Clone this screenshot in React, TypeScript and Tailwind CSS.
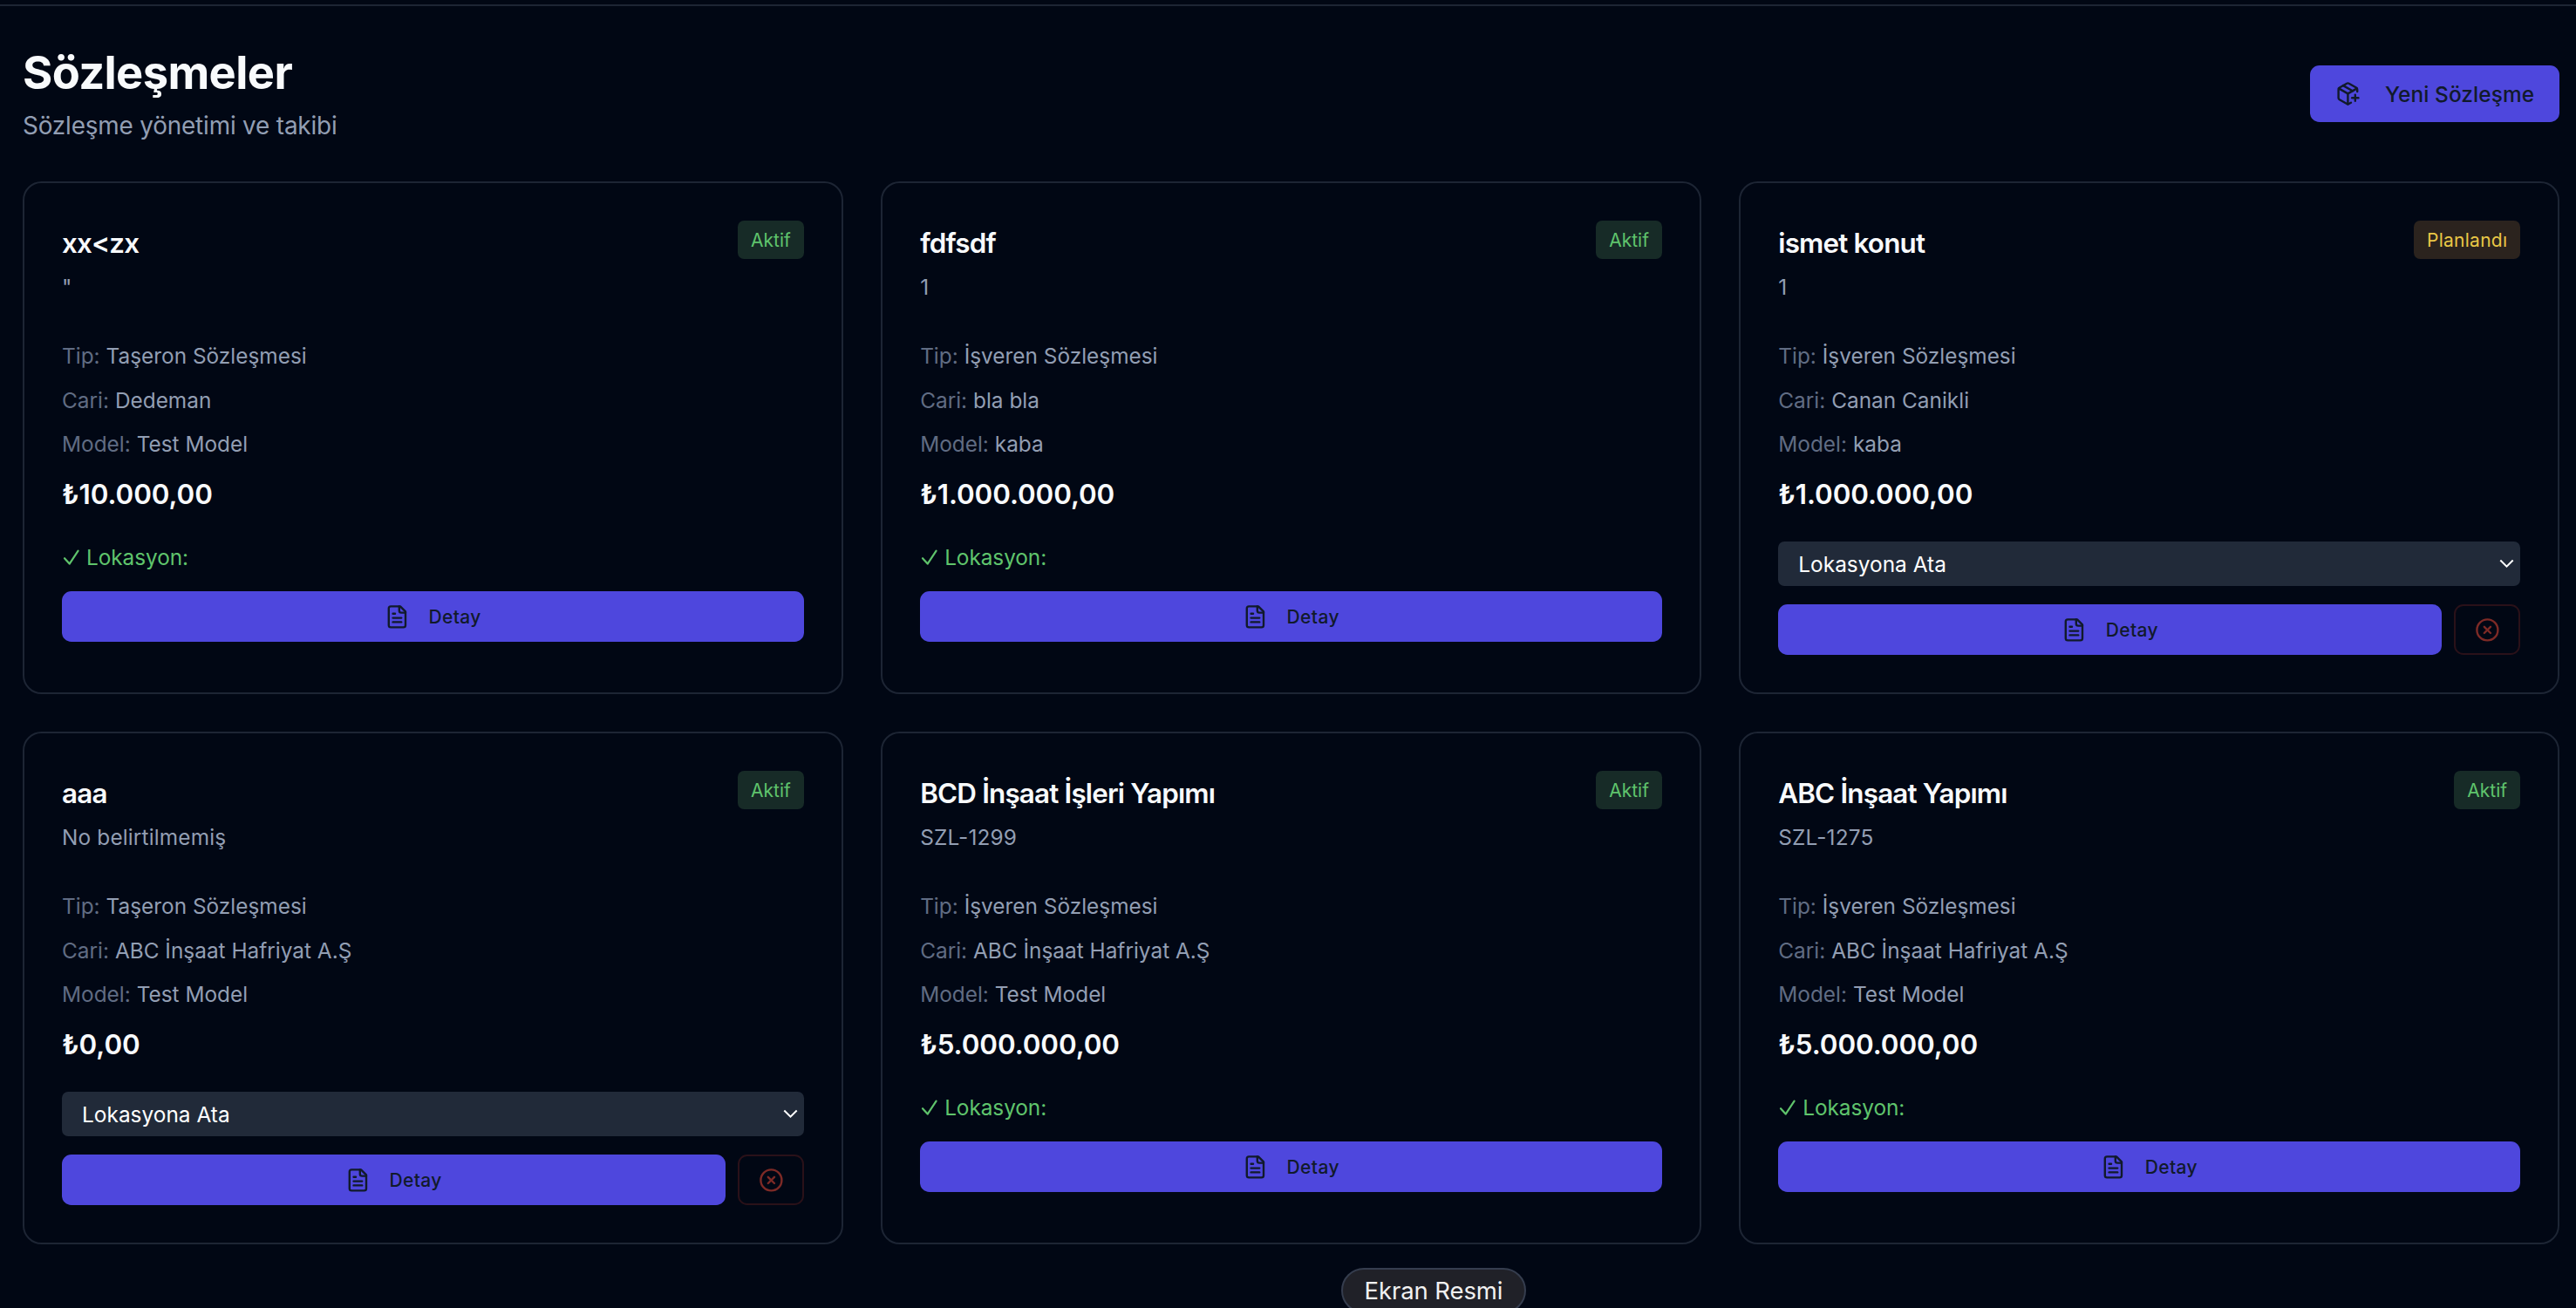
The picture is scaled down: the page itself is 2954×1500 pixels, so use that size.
import { CircleX, PackagePlus } from "lucide-react";

type Status = "active" | "planned";

interface Contract {
  id: number;
  name: string;
  number: string;
  type: string;
  account: string;
  model: string;
  amount: string;
  status: Status;
  assigned: boolean;
}

const CONTRACTS: Contract[] = [
  { id: 1, name: "xx<zx", number: '"', type: "Taşeron Sözleşmesi", account: "Dedeman", model: "Test Model", amount: "₺10.000,00", status: "active", assigned: true },
  { id: 2, name: "fdfsdf", number: "1", type: "İşveren Sözleşmesi", account: "bla bla", model: "kaba", amount: "₺1.000.000,00", status: "active", assigned: true },
  { id: 3, name: "ismet konut", number: "1", type: "İşveren Sözleşmesi", account: "Canan Canikli", model: "kaba", amount: "₺1.000.000,00", status: "planned", assigned: false },
  { id: 4, name: "aaa", number: "No belirtilmemiş", type: "Taşeron Sözleşmesi", account: "ABC İnşaat Hafriyat A.Ş", model: "Test Model", amount: "₺0,00", status: "active", assigned: false },
  { id: 5, name: "BCD İnşaat İşleri Yapımı", number: "SZL-1299", type: "İşveren Sözleşmesi", account: "ABC İnşaat Hafriyat A.Ş", model: "Test Model", amount: "₺5.000.000,00", status: "active", assigned: true },
  { id: 6, name: "ABC İnşaat Yapımı", number: "SZL-1275", type: "İşveren Sözleşmesi", account: "ABC İnşaat Hafriyat A.Ş", model: "Test Model", amount: "₺5.000.000,00", status: "active", assigned: true },
];

const STATUS: Record<Status, { label: string; className: string }> = {
  active: { label: "Aktif", className: "w-[75.6px] bg-[#172b27] text-[#5fc46c]" },
  planned: { label: "Planlandı", className: "w-[121.6px] bg-[#2b231e] text-[#e9c746] tracking-[0.012em]" },
};

const DocumentIcon = () => (
  <svg viewBox="0 0 24 24" className="size-[28.8px]" fill="none" stroke="currentColor" strokeWidth="2" strokeLinecap="round" strokeLinejoin="round">
    <path d="M15 2H6a2 2 0 0 0-2 2v16a2 2 0 0 0 2 2h12a2 2 0 0 0 2-2V7Z" />
    <path d="M14 2v4a2 2 0 0 0 2 2h4" />
    <path d="M10 9H8" />
    <path d="M16 13H8" />
    <path d="M16 17H8" />
  </svg>
);

const InfoRow = ({ label, value }: { label: string; value: string }) => (
  <p className="text-[24.4px] leading-[36px] text-[#929eb3]">
    <span className="text-[#606c83]">{label}:</span> {value}
  </p>
);

const ContractCard = ({ contract }: { contract: Contract }) => {
  const status = STATUS[contract.status];

  return (
    <div className="flex h-[588px] flex-col rounded-[21.6px] border-2 border-[#1d2534] p-[43px]">
      {/* Header */}
      <div className="flex items-start justify-between">
        <div>
          <h3 className="text-[31.4px] leading-[52px] font-semibold tracking-[-0.0265em] text-[#f8fafc]">
            {contract.name}
          </h3>
          <p className="mt-1.5 text-[24.4px] leading-[36px] tracking-[0.006em] text-[#929eb3]">
            {contract.number}
          </p>
        </div>
        <span
          className={`h-[43.6px] rounded-[7.2px] pt-px text-center text-[21px] leading-[43.4px] font-[430] ${status.className}`}
        >
          {status.label}
        </span>
      </div>

      {/* Details */}
      <div className="mt-[43.3px] flex flex-col gap-[14.4px]">
        <InfoRow label="Tip" value={contract.type} />
        <InfoRow label="Cari" value={contract.account} />
        <InfoRow label="Model" value={contract.model} />
        <p className="text-[31.4px] leading-[52px] font-semibold tracking-[-0.003em] text-[#f8fafc]">
          {contract.amount}
        </p>
      </div>

      {/* Location */}
      {contract.assigned ? (
        <div className="mt-[27.5px] flex h-9 items-center text-[24.4px] leading-[36px] tracking-[-0.003em] text-[#5fc46c]">
          <svg viewBox="0 0 28 22" className="h-[22px] w-7" fill="none" stroke="currentColor" strokeWidth="2.2" strokeLinecap="round" strokeLinejoin="round">
            <path d="M3 12.2 8.7 18.6 18.6 3.6" />
          </svg>
          Lokasyon:
        </div>
      ) : (
        <button className="mt-[27.2px] flex h-[51.4px] items-center justify-between rounded-[7.2px] bg-[#212a39] pr-[7px] pl-[23px] text-[24.4px] tracking-[0.001em] text-white">
          <span className="pt-0.5">Lokasyona Ata</span>
          <svg viewBox="0 0 17 11" className="h-[11px] w-[17px]" fill="none" stroke="currentColor" strokeWidth="2">
            <path d="M1.3 1.5 8.5 8.7l7.2-7.2" />
          </svg>
        </button>
      )}

      {/* Actions */}
      <div className="mt-[21.4px] flex gap-[14.4px]">
        <button className="flex h-[57.4px] flex-1 items-center justify-center gap-[21.6px] rounded-[10.8px] bg-[#4e47dd] text-[21px] font-[450] tracking-[0.018em] text-[#111a2b]">
          <DocumentIcon />
          <span className="pt-px">Detay</span>
        </button>
        {!contract.assigned && (
          <button className="flex h-[57.4px] w-[75.6px] items-center justify-center rounded-[10.8px] border-2 border-[#2a1119] text-[#7d2a26]">
            <CircleX className="size-[28.8px]" />
          </button>
        )}
      </div>
    </div>
  );
};

export default function App() {
  return (
    <div className="relative h-[1500px] overflow-hidden bg-[#010714] pt-[5px] font-[Inter,'Liberation_Sans',sans-serif]">
      <main className="border-t-2 border-[#1d2534] pt-[43px] pr-[19px] pl-[26px]">
        <div className="flex items-center justify-between">
          <div>
            <h1 className="text-[52.4px] leading-[66px] font-bold tracking-[-0.0118em] text-[#f8fafc]">
              Sözleşmeler
            </h1>
            <p className="mt-[7px] text-[27.9px] leading-[43px] tracking-[-0.0065em] text-[#929eb3]">
              Sözleşme yönetimi ve takibi
            </p>
          </div>
          <button className="mb-px flex h-[65px] items-center gap-[28.8px] rounded-[10.8px] bg-[#4e47dd] px-[28.8px] text-[24.4px] font-[450] tracking-[0.004em] text-[#111a2b]">
            <PackagePlus className="size-[28.8px]" />
            <span className="pt-px">Yeni Sözleşme</span>
          </button>
        </div>

        <div className="mt-[42px] grid grid-cols-3 gap-x-[43.4px] gap-y-[43px]">
          {CONTRACTS.map((contract) => (
            <ContractCard key={contract.id} contract={contract} />
          ))}
        </div>
      </main>

      {/* Tooltip over the bottom edge */}
      <div className="absolute top-[1454px] left-[1538px] flex h-[52px] w-[212px] items-center justify-center rounded-full border-2 border-[#353d4e] bg-[#202128] pt-0.5 text-[27.5px] tracking-[-0.004em] text-[#f1f1f1]">
        Ekran Resmi
      </div>
    </div>
  );
}
